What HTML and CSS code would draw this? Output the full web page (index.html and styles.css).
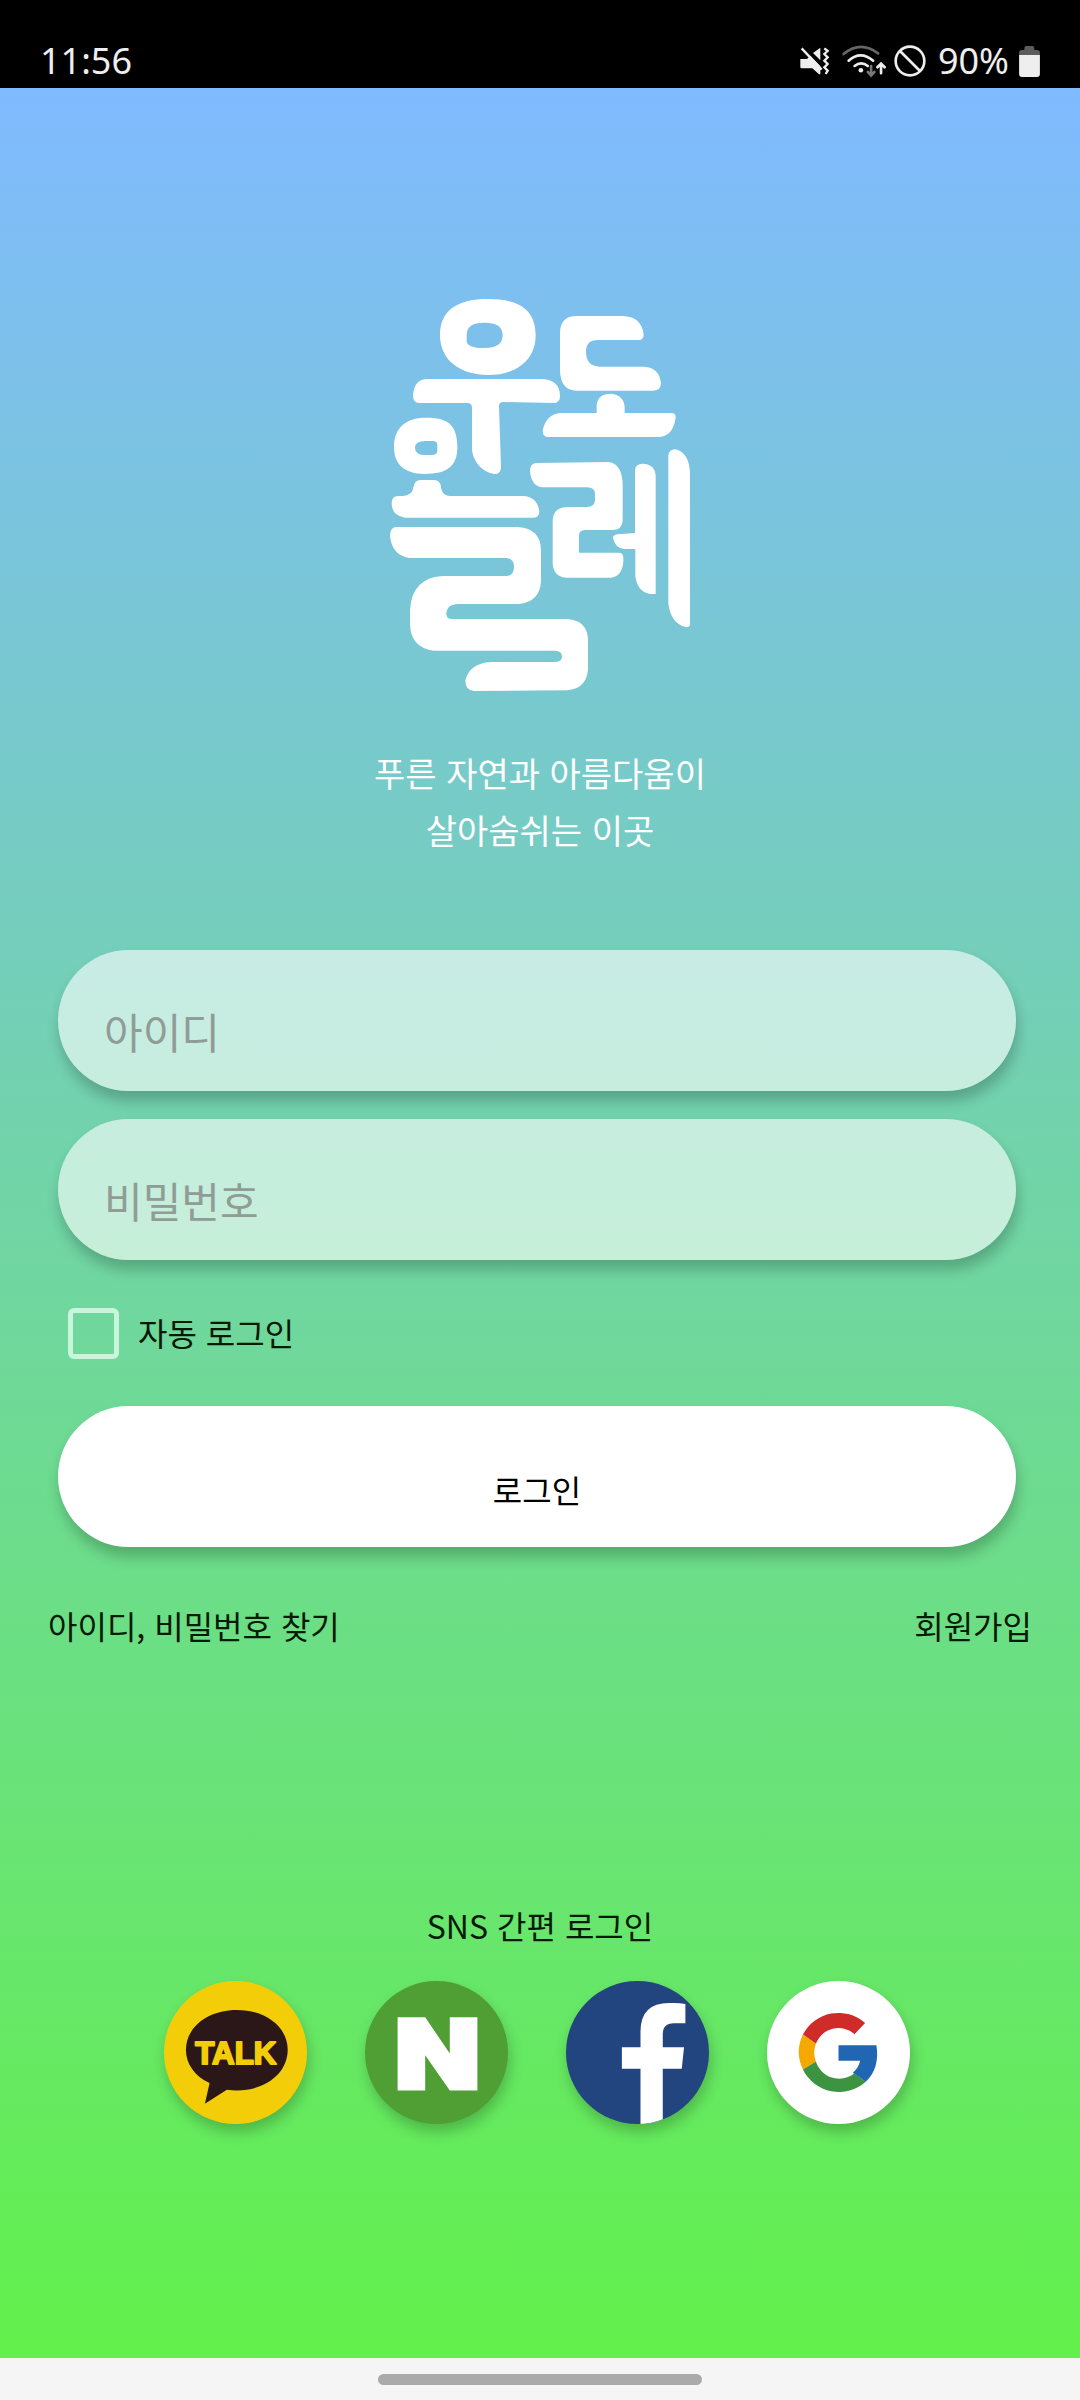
FILE: index.html
```
<!DOCTYPE html>
<html lang="ko">
  <head>
    <meta charset="UTF-8" />
    <meta name="viewport" content="width=device-width, initial-scale=1.0" />
    <title>로그인</title>
    <link rel="stylesheet" href="styles.css">
  </head>
  <body>
    <header class="status-bar">
      <span class="time">11:56</span>
      <div class="status-icons">
        <svg class="icon-mute" viewBox="0 0 90 84" width="30" height="28">
          <path d="M4 36h20l10-10 30 32v24h-4L40 64H8q-4 0-4-4z" fill="#eee"/>
          <path d="M42 18L64 2v38z" fill="#eee"/>
          <path d="M8 4l60 64M76 4l10 8-10 9 10 10-10 10 10 10-10 10 10 10-6 10" fill="none" stroke="#eee" stroke-width="7"/>
        </svg>
        <svg class="icon-wifi" viewBox="0 0 136 102" width="45" height="34">
          <g fill="none" stroke-width="8" stroke-linecap="round">
            <path d="M5 30Q56-12 109 28" stroke="#666"/>
            <path d="M20 50q36-32 74 0M38 66q20-16 40 0" stroke="#eee"/>
            <path d="M88 66v28M78 84l10 11 10-11" stroke="#777"/>
            <path d="M118 88V60M107 70l11-11 11 11" stroke="#eee"/>
          </g>
          <circle cx="57" cy="79" r="7" fill="#eee"/>
        </svg>
        <svg class="icon-block" viewBox="0 0 96 96" width="32" height="32">
          <g fill="none" stroke="#eee" stroke-width="8">
            <circle cx="48" cy="48" r="43"/>
            <path d="M18 18l60 60"/>
          </g>
        </svg>
        <span class="percent">90%</span>
        <svg class="icon-battery" viewBox="0 0 63 94" width="21" height="31">
          <path d="M0 28V20q0-8 8-8h8V6q0-6 6-6h18q6 0 6 6v6h8q9 0 9 8v8z" fill="#5c5c5c"/>
          <path d="M0 27h63v58q0 9-9 9H9q-9 0-9-9z" fill="#eee"/>
        </svg>
      </div>
    </header>

    <main class="page">
      <svg class="logo" viewBox="60 57 900 1176" width="300" height="392" role="img" aria-label="우도 올레">
        <g fill="#fff" fill-rule="evenodd">
          <path d="M354 57C445 57 497 88 497 166C497 240 440 285 354 285C270 285 210 240 210 166C210 88 265 57 354 57zM343 128C305 128 290 140 290 168V182Q290 204 343 204C380 204 398 192 398 166C398 140 380 128 343 128z"/>
          <path d="M172 297H516Q570 300 570 348Q570 369 552 369L400 366Q387 366 387 378L393 560Q393 582 374 582C335 578 306 540 306 505V384Q306 369 292 369H148Q129 369 129 345Q133 297 172 297z"/>
          <path d="M620 108H758Q814 110 821 162Q821 180 806 180H684Q648 180 648 214Q648 260 690 260H822Q868 262 873 310Q873 332 850 332H620Q570 332 570 268V160Q570 108 620 108z"/>
          <path d="M680 399V374Q684 341 723 341Q764 346 764 384V399H905Q917 399 917 412Q910 468 868 471H536Q518 471 518 452Q528 402 572 399z"/>
          <path d="M168 413C232 413 262 432 262 502C262 560 230 582 165 582C102 582 72 552 72 502C72 445 105 413 168 413zM166 483Q135 483 135 503Q135 525 166 525H184Q202 525 202 512V494Q202 483 188 483z"/>
          <path d="M152 600H192Q212 600 213 624Q218 647 238 648H458Q502 650 508 694Q508 713 490 713H105Q65 707 65 670Q65 648 84 648H98Q128 646 130 622Q134 600 152 600z"/>
          <path d="M80 741H444Q513 746 513 812V904Q510 966 446 972H266Q229 972 229 1002Q229 1017 246 1017H592Q654 1022 654 1082V1168Q650 1226 592 1231L312 1233Q286 1230 286 1202Q298 1150 362 1146H552Q576 1146 576 1130Q576 1112 556 1112H190Q120 1102 120 1030V990Q126 892 220 888H408Q432 888 432 861Q432 834 406 834H118Q66 826 60 768Q60 741 80 741z"/>
          <path d="M500 549L716 546Q758 552 758 618V720Q758 750 726 750H644Q627 750 627 768V818H746Q760 818 760 834V846Q756 890 722 893H588Q548 890 548 846V720Q550 681 594 681H650Q675 681 675 660V642Q675 622 652 622H516Q484 618 480 574Q480 549 500 549z"/>
          <path d="M795 570Q797 551 818 551Q857 553 857 590V942Q805 946 796 890V807H762Q735 804 729 774Q729 765 742 763L795 759z"/>
          <path d="M895 526Q897 508 916 508Q958 518 960 580V1032Q960 1041 950 1042Q902 1032 895 970z"/>
        </g>
      </svg>

      <p class="tagline">푸른 자연과 아름다움이<br>살아숨쉬는 이곳</p>

      <form class="login-form">
        <input class="field" type="text" name="userId" placeholder="아이디" aria-label="아이디">
        <input class="field" type="password" name="password" placeholder="비밀번호" aria-label="비밀번호">
        <div class="auto-login">
          <input type="checkbox" id="autoLogin" name="autoLogin">
          <label for="autoLogin">자동 로그인</label>
        </div>
        <button class="login-button" type="submit">로그인</button>
      </form>

      <nav class="links">
        <a href="#find">아이디, 비밀번호 찾기</a>
        <a href="#join">회원가입</a>
      </nav>

      <section class="sns">
        <h2>SNS 간편 로그인</h2>
        <div class="sns-list">
          <button class="sns-button kakao" type="button" aria-label="카카오톡 로그인">
            <svg viewBox="0 0 430 430">
              <path d="M219 87C305 87 372 138 372 207C372 278 305 329 219 329Q204 329 189 327L123 369L137 307C92 286 66 250 66 207C66 138 133 87 219 87z" fill="#2b1718"/>
              <text class="talk" x="216" y="250" text-anchor="middle">TALK</text>
            </svg>
          </button>
          <button class="sns-button naver" type="button" aria-label="네이버 로그인">
            <svg viewBox="0 0 430 430">
              <path d="M98 109h83l74 109V109h83v220h-83l-74-106v106H98z" fill="#fff"/>
            </svg>
          </button>
          <button class="sns-button facebook" type="button" aria-label="페이스북 로그인">
            <svg viewBox="0 0 430 430">
              <path d="M224 430V264H168V199H224V152Q224 66 310 66Q340 65 359 69V127H324Q291 127 291 160V199H355L348 264H291V430z" fill="#fff"/>
            </svg>
          </button>
          <button class="sns-button google" type="button" aria-label="구글 로그인">
            <svg viewBox="0 0 430 430">
              <path d="M108 161A121 121 0 0 1 295 126L263 160A72 72 0 0 0 147 189z" fill="#cf2b29"/>
              <path d="M108 161A121 121 0 0 0 108 266L147 242A73 73 0 0 1 147 189z" fill="#f4a800"/>
              <path d="M108 266A121 121 0 0 0 297 303L262 278A73 73 0 0 1 147 242z" fill="#3d9440"/>
              <path d="M215 193H329Q340 262 297 303L258 276Q276 261 280 240H215z" fill="#2066b2"/>
            </svg>
          </button>
        </div>
      </section>
    </main>

    <footer class="home-bar"><span></span></footer>
  </body>
</html>
```

FILE: styles.css
```
* {
  box-sizing: border-box;
}
body {
  margin: 0;
  min-height: 100vh;
  display: flex;
  flex-direction: column;
  font-family: "Noto Sans CJK KR", "Noto Sans", sans-serif;
  font-size: 32px;
  color: #041a04;
}
.status-bar {
  height: 88px;
  padding: 34px 40px 0 40px;
  display: flex;
  justify-content: space-between;
  background-color: #000;
  color: #eee;
  font-family: "Noto Sans", sans-serif;
  font-size: 36px;
  line-height: 54px;
}
.status-icons {
  display: flex;
  align-items: center;
}
.icon-mute {
  margin-right: 13px;
}
.icon-wifi {
  margin-right: 7px;
}
.icon-block {
  margin-right: 12px;
}
.percent {
  margin-right: 10px;
}
.page {
  flex: 1;
  display: flex;
  flex-direction: column;
  padding-top: 211px;
  background: linear-gradient(#80baff, #62f04b);
}
.logo {
  align-self: center;
}
.tagline {
  margin: 53px 0 92px;
  color: #fff;
  font-size: 34px;
  line-height: 57px;
  text-align: center;
}
.login-form {
  display: flex;
  flex-direction: column;
  margin: 0 64px 0 58px;
}
.field,
.login-button {
  width: 100%;
  height: 141px;
  border: none;
  border-radius: 71px;
  font-family: inherit;
  box-shadow: 2px 10px 14px rgba(0, 0, 0, 0.22);
}
.field {
  margin-bottom: 28px;
  padding: 20px 46px 0;
  background-color: rgba(255, 255, 255, 0.6);
  color: #333;
  font-size: 42px;
}
.field::placeholder {
  color: #909c96;
  opacity: 1;
}
.auto-login {
  display: flex;
  align-items: center;
  gap: 19px;
  margin: 20px 0 47px 10px;
}
.auto-login input {
  appearance: none;
  width: 51px;
  height: 51px;
  margin: 0;
  border: 5px solid #c9f5dc;
  border-radius: 6px;
}
.auto-login input:checked {
  background-color: #c9f5dc;
}
.auto-login label {
  line-height: 48px;
  padding-bottom: 3px;
}
.login-button {
  padding: 24px 0 0;
  background-color: #fff;
  color: #000;
  font-size: 32px;
  cursor: pointer;
}
.links {
  display: flex;
  justify-content: space-between;
  margin: 54px 48px 0;
  line-height: 48px;
}
.links a {
  color: inherit;
  text-decoration: none;
}
.sns {
  margin-top: 252px;
  text-align: center;
}
.sns h2 {
  margin: 0 0 32px;
  font-size: 32px;
  font-weight: 400;
  line-height: 48px;
}
.sns-list {
  display: flex;
  justify-content: center;
  gap: 58px;
  padding-right: 6px;
}
.sns-button {
  width: 143px;
  height: 143px;
  padding: 0;
  border: none;
  border-radius: 50%;
  overflow: hidden;
  cursor: pointer;
  box-shadow: 2px 8px 14px rgba(0, 0, 0, 0.22);
}
.sns-button svg {
  display: block;
  width: 100%;
}
.kakao {
  background-color: #f3ce08;
}
.naver {
  background-color: #4f9f34;
}
.facebook {
  background-color: #22447f;
}
.google {
  background-color: #fff;
}
.talk {
  fill: #f3ce08;
  stroke: #f3ce08;
  stroke-width: 6px;
  stroke-linejoin: round;
  font-family: "Liberation Sans", Arial, sans-serif;
  font-size: 94px;
  font-weight: 700;
}
.home-bar {
  height: 42px;
  display: flex;
  align-items: center;
  justify-content: center;
  background-color: #f5f5f5;
}
.home-bar span {
  width: 30%;
  height: 11px;
  border-radius: 6px;
  background-color: #aaa;
}
```
